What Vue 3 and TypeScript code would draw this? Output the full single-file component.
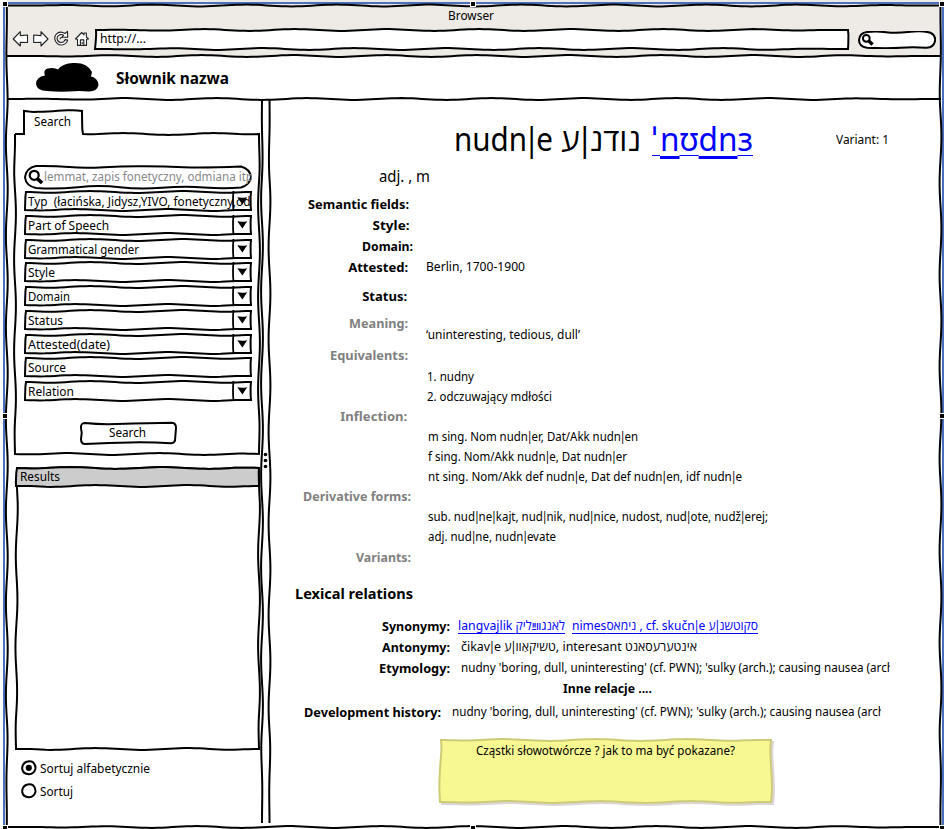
<script setup lang="ts">
import { h, type FunctionalComponent } from 'vue'

/* Hand-drawn line from one point to another: a soft sine wobble round the straight line. */
function wavePoints(x0: number, y0: number, x1: number, y1: number, phase = 0, amp = 0.9): string {
  const len = Math.hypot(x1 - x0, y1 - y0)
  const steps = Math.max(2, Math.round(len / 5))
  const size = Math.min(amp, len / 45)
  const nx = -(y1 - y0) / len
  const ny = (x1 - x0) / len
  const points: string[] = []
  for (let i = 0; i <= steps; i++) {
    const t = i / steps
    const ease = Math.min(1, t * 8, (1 - t) * 8)
    const off = size * ease * Math.sin((t * len * Math.PI * 2) / 92 + phase)
    points.push(`${(x0 + (x1 - x0) * t + nx * off).toFixed(2)} ${(y0 + (y1 - y0) * t + ny * off).toFixed(2)}`)
  }
  return points.join('L')
}

function line(x0: number, y0: number, x1: number, y1: number, phase = 0, amp = 0.9): string {
  return 'M' + wavePoints(x0, y0, x1, y1, phase, amp)
}

function box(w: number, ht: number, phase = 0): string {
  return (
    'M' + wavePoints(0, 0, w, 0, phase) +
    'L' + wavePoints(w, 0, w, ht, phase + 1) +
    'L' + wavePoints(w, ht, 0, ht, phase + 2) +
    'L' + wavePoints(0, ht, 1, 0, phase + 3) + 'Z'
  )
}

const Frame: FunctionalComponent<{ w: number; ht: number; fill?: string; stroke?: string; phase?: number }> = (p) =>
  h('svg', { class: 'frame', width: p.w, height: p.ht }, [
    h('path', {
      d: box(p.w, p.ht, p.phase ?? 0.4),
      fill: p.fill ?? '#fff',
      stroke: p.stroke ?? '#000',
      'stroke-width': 2,
    }),
  ])
Frame.props = ['w', 'ht', 'fill', 'stroke', 'phase']

/* Text whose stem separators (|) are set tight against their neighbours. */
const Stem: FunctionalComponent<{ text: string }> = (p) =>
  h('span', p.text.split(/(\|)/).map((s) => (s === '|' ? h('span', { class: 'stem-bar' }, s) : s)))
Stem.props = ['text']

/* Condenses a piece of text to the given width. */
const vFit = {
  mounted(el: HTMLElement, binding: { value: number }) {
    const natural = el.getBoundingClientRect().width
    el.style.width = binding.value + 'px'
    el.style.transform = `scaleX(${binding.value / natural})`
  },
}

interface Field { label: string; w: number; gap: number; plain?: boolean }
const fields: Field[] = [
  { label: 'Typ  (łacińska, Jidysz,YIVO, fonetyczny,odmiana', w: 257, gap: 4 },
  { label: 'Part of Speech', w: 81, gap: 5 },
  { label: 'Grammatical gender', w: 111, gap: 5 },
  { label: 'Style', w: 27, gap: 4 },
  { label: 'Domain', w: 42, gap: 5 },
  { label: 'Status', w: 35, gap: 5 },
  { label: 'Attested(date)', w: 82, gap: 5 },
  { label: 'Source', w: 38, gap: 4, plain: true },
  { label: 'Relation', w: 46, gap: 5 },
]

interface Row { y: number; label?: string; lw?: number; end?: number; soft?: boolean; text?: string; start?: number; tw?: number; lift?: boolean }
const rows: Row[] = [
  { y: 204, label: 'Semantic fields:', lw: 101, end: 409 },
  { y: 225, label: 'Style:', lw: 37, end: 408 },
  { y: 246, label: 'Domain:', lw: 51, end: 413 },
  { y: 267, label: 'Attested:', lw: 60, end: 408, text: 'Berlin, 1700-1900', start: 426, tw: 99, lift: true },
  { y: 296, label: 'Status:', lw: 45, end: 407 },
  { y: 323, label: 'Meaning:', lw: 59, end: 408, soft: true },
  { y: 334, text: '‘uninteresting, tedious, dull’', start: 426, tw: 154 },
  { y: 355, label: 'Equivalents:', lw: 78, end: 408, soft: true },
  { y: 376, text: '1. nudny', start: 427, tw: 47 },
  { y: 396, text: '2. odczuwający mdłości', start: 427, tw: 125 },
  { y: 416, label: 'Inflection:', lw: 67, end: 407, soft: true },
  { y: 436, text: 'm sing. Nom nudn|er, Dat/Akk nudn|en', start: 428, tw: 210 },
  { y: 456, text: 'f sing. Nom/Akk nudn|e, Dat nudn|er', start: 428, tw: 199 },
  { y: 476, text: 'nt sing. Nom/Akk def nudn|e, Dat def nudn|en, idf nudn|e', start: 428, tw: 314 },
  { y: 496, label: 'Derivative forms:', lw: 108, end: 411, soft: true },
  { y: 516, text: 'sub. nud|ne|kajt, nud|nik, nud|nice, nudost, nud|ote, nudž|erej;', start: 428, tw: 340 },
  { y: 536, text: 'adj. nud|ne, nudn|evate', start: 428, tw: 128 },
  { y: 557, label: 'Variants:', lw: 55, end: 411, soft: true },
]
const rowGap = (i: number) => (i === 0 ? 0 : rows[i].y - rows[i - 1].y - 20)
const textGap = (r: Row) => (r.start ?? 0) - (r.end ?? 270)

const handles = [
  [3, 2], [471, 2], [940, 2],
  [3, 414], [940, 414],
  [3, 826], [471, 826], [940, 826],
]
const history = "nudny 'boring, dull, uninteresting' (cf. PWN); 'sulky (arch.); causing nausea (arch"
</script>

<template>
  <div class="page">
    <header class="chrome">
      <div class="caption"><span v-fit="46" class="t">Browser</span></div>
      <div class="toolbar">
        <svg class="nav" width="82" height="20" fill="#fff" stroke="#222" stroke-width="1.1" stroke-linejoin="round">
          <path d="M1.2 10 8.3 2.6 8.3 6.6 15.5 6 15.5 13.5 8.3 13.4 8.3 17Z" />
          <path d="M36 10 29 2.6 29 6.6 21.7 6 21.7 13.5 29 13.4 29 17Z" />
          <path d="M53 4.5Q49 1.8 45.3 4.2Q41.3 7.6 43.5 12.3Q46 16.7 50.8 15.8Q54.8 14.8 55.6 11L53.1 10.6Q52 13.6 49 13.5Q45.4 13 45.1 9.6Q45.2 6 49 5.5Q50.6 5.4 51.6 6.2L50 8.1 55.7 8.2 55.5 2.3Z" />
          <path d="M48 10.3A2 2 0 0 1 50 8.5" fill="none" />
          <path d="M63.5 10 69.7 3.5 72 5.8 72 4 74.4 4 74.4 8 76.5 10 74.5 10.2 74.5 16.4 65.5 16.4 65.5 10.2Z" />
          <path d="M68.4 16V10.9H71.8V16M70.2 13V15" fill="none" />
        </svg>
        <div class="url"><Frame :w="753" :ht="19" :phase="3.6" /><span v-fit="46" class="t">http://...</span></div>
        <div class="quick">
          <svg width="78" height="18" fill="none" stroke="#000" stroke-width="2">
            <path d="M9 1Q18 0 28 1.2T50 1T69 .9Q77 2 77.3 9Q76 17 68 16.7Q55 15.8 42 16.7T9 16.7Q1 15.5 1 9Q1.5 2 9 1Z" fill="#fff" />
            <circle cx="8.3" cy="7.3" r="3.4" /><path d="m10.8 10 3.8 3.5" stroke-width="3.4" />
          </svg>
        </div>
      </div>
    </header>

    <div class="brand">
      <svg width="64" height="31"><path d="M12 29Q2 29 1 22Q1 15 10 13.5Q7 6 17 6Q21 6 23 7.5Q28 1 38 1Q52 0 57 10L56 14.5Q63 16 63.5 23Q62 30 53 29.5Q45 28.5 34 29.5Q23 30 12 29Z" /></svg>
      <strong v-fit="113" class="t">Słownik nazwa</strong>
    </div>

    <main class="body">
      <aside class="side">
        <div class="tab"><span v-fit="37" class="t">Search</span></div>
        <section class="panel">
          <svg class="frame outline" width="244" height="344" fill="none" stroke="#000" stroke-width="2">
            <path :d="line(0, 23, 9, 23) + 'L9 0L' + line(9, 0, 67, 0, 1).slice(1) + 'L' + line(67, 0, 68, 23).slice(1) + 'L' + line(68, 23, 244, 23, 2).slice(1) + 'L' + line(244, 23, 244, 343, 3).slice(1) + 'L' + line(244, 343, 0, 343, 1).slice(1) + 'L' + line(0, 343, 0, 23, 4).slice(1)" />
          </svg>
          <div class="lookup">
            <svg class="frame" width="228" height="24" fill="none" stroke="#000" stroke-width="2">
              <path d="M12 1Q30 .7 45 2T80 2.2T120 1.3T160 2.2T217 1.5Q226 4 227 12Q226 20 217 22.5Q200 23.8 180 22.4T138 22.8T96 22.3T54 22.2T12 23Q2 21 1 12.5Q2 3 12 1Z" fill="#fff" />
              <circle cx="10.2" cy="10.3" r="4.5" stroke-width="2.2" /><path d="m13.5 13.8 4.6 4.2" stroke-width="3.6" />
            </svg>
            <div class="hint"><span v-fit="209" class="t">lemmat, zapis fonetyczny, odmiana itp</span></div>
          </div>
          <div v-for="f in fields" :key="f.label" class="field" :style="{ marginTop: f.gap + 'px' }">
            <Frame :w="226" :ht="18" :phase="0.2" />
            <svg v-if="!f.plain" class="drop" width="20" height="20">
              <path d="M1.5 0Q.5 9 1.5 20" fill="none" stroke="#000" stroke-width="1.8" />
              <path d="M5.3 6.3Q10 7.2 15.2 6.2L10.4 13.4Z" />
            </svg>
            <div class="value"><span v-fit="f.w" class="t">{{ f.label }}</span></div>
          </div>
          <button class="go">
            <svg class="frame" width="96" height="22"><path d="M5 1Q20 2.6 37 2T68 1.2T92 .8Q96 1 96 6L95.2 16Q95.5 21 91 21.2Q70 20 50 20.4T5 22Q1 22 1 17Q2.5 11 1 6Q.5 1 5 1Z" fill="#fff" stroke="#000" stroke-width="2" /></svg>
            <span v-fit="37" class="t">Search</span>
          </button>
        </section>

        <section class="results">
          <Frame :w="243" :ht="281" :phase="1" />
          <div class="results-head"><Frame :w="243" :ht="18" fill="#ccc" :phase="1" /><span v-fit="40" class="t">Results</span></div>
        </section>

        <label class="radio">
          <svg width="16" height="16" fill="none" stroke="#000" stroke-width="2"><path d="M5 2Q9 .5 12 2.2Q15 5 14.4 9Q13 14 8 14.2Q2 14 1.2 9Q1 4 5 2Z" /><circle cx="7.8" cy="7.8" r="3.1" fill="#000" stroke="none" /></svg>
          <span v-fit="110" class="t">Sortuj alfabetycznie</span>
        </label>
        <label class="radio second">
          <svg width="16" height="16" fill="none" stroke="#000" stroke-width="2"><path d="M5 2Q9 .5 12 2.2Q15 5 14.4 9Q13 14 8 14.2Q2 14 1.2 9Q1 4 5 2Z" /></svg>
          <span v-fit="33" class="t">Sortuj</span>
        </label>
      </aside>

      <article class="entry">
        <div class="headline">
          <span v-fit="99" class="t"><Stem text="nudn|e" /></span>
          <span v-fit="80" class="t heb"><Stem text="נודנ|ע" /></span>
          <a v-fit="101" class="t ipa"><span class="stress">ˈ</span><span class="thick">n</span><span>ʊ</span><span class="thick">dn</span><span>ɜ</span></a>
          <span v-fit="53" class="t variant">Variant: 1</span>
        </div>
        <div class="grammar"><span v-fit="51" class="t">adj. , m</span></div>

        <div v-for="(r, i) in rows" :key="r.y" class="row" :style="{ marginTop: rowGap(i) + 'px' }">
          <div v-if="r.label" class="label" :class="{ soft: r.soft }" :style="{ width: (r.end ?? 0) - 270 + 'px' }">
            <span v-fit="r.lw" class="t">{{ r.label }}</span>
          </div>
          <div v-if="r.text" :class="{ lift: r.lift }" :style="{ marginLeft: textGap(r) + 'px' }">
            <span v-fit="r.tw" class="t"><Stem :text="r.text" /></span>
          </div>
        </div>

        <h2 class="section"><span v-fit="118" class="t">Lexical relations</span></h2>

        <div class="row rel">
          <div class="label rel-label"><span v-fit="68" class="t">Synonymy:</span></div>
          <div class="links lift">
            <a v-fit="107" class="t">langvajlik לאנגװײַליק</a>
            <a v-fit="186" class="t"><Stem text="nimesנימאס , cf. skučn|e סקוטשנ|ע" /></a>
          </div>
        </div>
        <div class="row rel">
          <div class="label rel-label"><span v-fit="68" class="t">Antonymy:</span></div>
          <div class="rel-text lift"><span v-fit="236" class="t"><Stem text="čikav|e טשיקאַוו|ע, interesant אינטערעסאנט" /></span></div>
        </div>
        <div class="row rel">
          <div class="label rel-label"><span v-fit="71" class="t">Etymology:</span></div>
          <div class="rel-text clip lift"><span v-fit="433" class="t">{{ history }}</span></div>
        </div>
        <div class="more"><span v-fit="89" class="t">Inne relacje ....</span></div>
        <div class="row dev">
          <div class="label dev-label"><span v-fit="137" class="t">Development history:</span></div>
          <div class="dev-text clip lift"><span v-fit="433" class="t">{{ history }}</span></div>
        </div>

        <div class="note">
          <Frame class="shade" :w="331" :ht="62" fill="#ddd5d8" stroke="#ddd5d8" />
          <Frame :w="331" :ht="62" fill="#f8f893" stroke="#cccc78" />
          <span v-fit="259" class="t">Cząstki słowotwórcze ? jak to ma być pokazane?</span>
        </div>
      </article>
    </main>

    <svg class="overlay" width="947" height="829" fill="none" stroke="#000" stroke-width="2">
      <path d="M4 3V828M5 3H943M943 3V828" stroke="#4a6fbd" />
      <path :d="line(7, 5.5, 941, 5.5, 1) + line(940.5, 5, 940.5, 827, 2) + line(941, 827, 7, 827, 1) + line(6.8, 827, 6.8, 5, 2)" />
      <path :d="line(7, 56, 941, 56, 4) + line(7, 99, 941, 99, 3)" />
      <path :d="line(262, 99, 262, 823, 1) + line(269.5, 99, 269.5, 823, 4)" />
      <g fill="#000" stroke="none"><circle cx="265.5" cy="454.5" r="1.8" /><circle cx="265.5" cy="460.5" r="1.8" /><circle cx="265.5" cy="466.5" r="1.8" /></g>
      <rect v-for="(p, i) in handles" :key="i" :x="p[0] - 0.5" :y="p[1] - 0.5" width="5" height="5" fill="#000" stroke="#fff" stroke-width="1" />
    </svg>
  </div>
</template>

<style>
body { margin: 0; background: #fff; overflow: hidden; }
.stem-bar { margin: 0 -0.12em; }
</style>

<style scoped>
.page { position: relative; width: 947px; height: 829px; overflow: hidden; background: #fff; color: #000; font: 13px/20px "Noto Sans", "Open Sans", "DejaVu Sans", sans-serif; }
.t { display: inline-block; white-space: pre; transform-origin: 0 50%; flex: none; }
.frame { position: absolute; left: 0; top: 0; overflow: visible; display: block; }
.frame.outline { left: -0.8px; }
.frame + .t, .frame + .frame + .t { position: relative; }
.overlay { position: absolute; left: 0; top: 0; pointer-events: none; }

.chrome { height: 56px; margin: 0 6px 0 7px; background: #eeebe7; box-sizing: border-box; padding-top: 5px; }
.caption { height: 21px; padding-left: 441px; }
.toolbar { display: flex; align-items: flex-start; padding-left: 5px; }
.nav { margin-top: 3px; }
.url { position: relative; width: 748px; height: 19px; margin: 4px 0 0 1px; padding-left: 5px; line-height: 17px; }
.quick { margin: 5px 0 0 10px; height: 18px; }
.quick svg { display: block; }

.brand { display: flex; height: 43px; padding-left: 35px; box-sizing: border-box; }
.brand svg { margin-top: 6px; }
.brand .t { margin-left: 17px; font-size: 16.5px; line-height: 44px; font-weight: 700; }

.body { display: flex; height: 730px; }
.side { width: 270px; padding: 12px 8px 0 15.5px; flex: none; box-sizing: border-box; }
.tab { height: 23px; padding-left: 18px; line-height: 20px; margin-bottom: -23px; position: relative; z-index: 1; }
.panel { position: relative; height: 343px; width: 244px; padding: 54px 0 0 9px; box-sizing: border-box; }
.lookup { position: relative; width: 228px; height: 23px; }
.lookup .frame { left: -1px; }
.hint { position: relative; padding-left: 19px; width: 208px; overflow: hidden; color: #888; line-height: 23px; height: 24px; }
.field { position: relative; height: 19px; width: 226px; }
.value { position: relative; padding-left: 3px; width: 223px; overflow: hidden; height: 20px; line-height: 19px; }
.drop { position: absolute; left: 207px; top: -1px; }
.go { position: relative; display: flex; width: 96px; height: 22px; margin: 21px 0 0 55px; padding: 0 0 0 29px; border: 0; background: none; font: inherit; line-height: 20px; color: #000; }

.results { position: relative; height: 281px; width: 243px; margin: 14px 0 0 0; }
.results-head { position: relative; height: 18px; padding-left: 4px; line-height: 17px; }
.radio { display: flex; height: 20px; margin: 9px 0 0 5px; gap: 3px; }
.radio svg { margin-top: 2px; }
.radio.second { margin-top: 3px; }

.entry { width: 677px; flex: none; }
.headline { display: flex; height: 56px; padding: 20px 0 0 184px; box-sizing: border-box; font-size: 32px; line-height: 40px; }
.heb { margin-left: 8px; }
.ipa { margin-left: 11px; color: #00f; }
.ipa span { text-decoration: underline; text-decoration-thickness: 1px; text-underline-offset: 4px; text-decoration-skip-ink: none; }
.ipa .thick { text-decoration-thickness: 3px; text-underline-offset: 5px; }
.ipa .stress { letter-spacing: 3px; }
.variant { margin-left: 83px; font-size: 13px; line-height: 41px; }
.grammar { height: 20px; margin: 11px 0 8px 109px; font-size: 16.5px; }
.row { display: flex; height: 20px; }
.label { text-align: right; font-weight: 700; flex: none; }
.soft { color: #808080; }
.lift { position: relative; top: -1px; }
.section { margin: 16px 0 13px 25px; height: 20px; font-size: 15px; font-weight: 700; line-height: 20px; }
.rel { margin-bottom: 1px; }
.rel-label { width: 180px; }
.rel-text { margin-left: 11px; }
.clip { width: 429px; overflow: hidden; }
.links { display: flex; gap: 7px; margin-left: 8px; color: #00f; }
.links a { text-decoration: underline; text-decoration-skip-ink: none; text-underline-offset: 3px; }
.more { height: 20px; padding-left: 293px; font-weight: 700; margin-top: -1px; }
.dev { margin-top: 4px; }
.dev-label { width: 171px; }
.dev-text { margin-left: 11px; }
.note { position: relative; width: 295px; height: 62px; margin: 18px 0 0 169.5px; padding-left: 36px; line-height: 21px; }
.shade { left: 2px; top: 2px; }
</style>
